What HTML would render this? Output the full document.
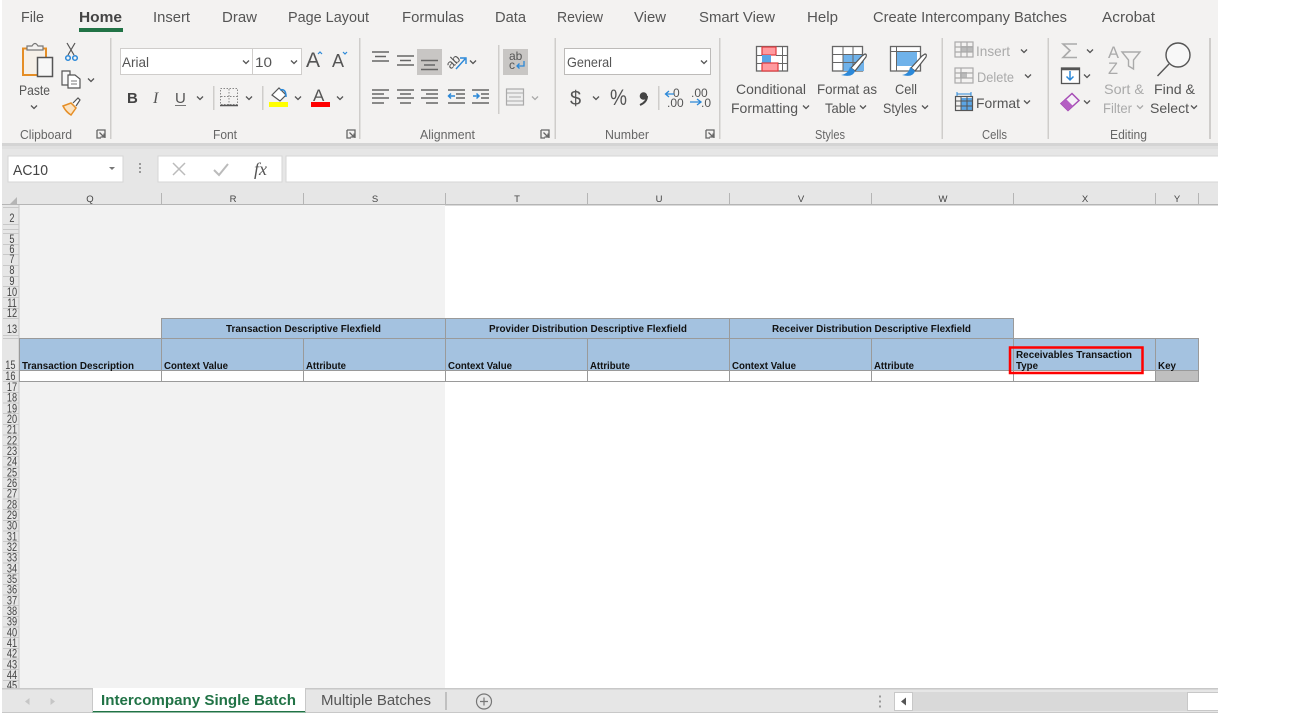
<!DOCTYPE html>
<html><head><meta charset="utf-8"><title>Excel</title>
<style>
html,body{margin:0;padding:0;background:#fff;width:1295px;height:715px;overflow:hidden}
svg{display:block;font-family:"Liberation Sans",sans-serif}
.t{font-size:15px;fill:#555}
.r{font-size:14px;fill:#555}
.g{font-size:14px;fill:#aaa}
.l{font-size:12.5px;fill:#666}
.c{font-size:9.5px;fill:#444;text-anchor:middle}
.n{font-size:11.5px;fill:#444;text-anchor:middle}
.b{font-size:10px;font-weight:bold;fill:#111}
.ch{fill:none;stroke:#555;stroke-width:1.3}
.ln{fill:none;stroke:#666;stroke-width:1.5}
.ic{fill:none;stroke:#666;stroke-width:1.3}
</style></head><body>
<svg width="1295" height="715" viewBox="0 0 1295 715" xmlns="http://www.w3.org/2000/svg">
<defs>
<path id="v" d="M-3 -1.500L0 1.500L3 -1.500"/>
<path id="lau" d="M0 0H8V8M0 0V8H4M2.5 2.5L7 7M7 3.5V7H3.5"/>
</defs>
<!-- backgrounds -->
<rect x="2" y="0" width="1216" height="143" fill="#f3f2f1"/>
<rect x="2" y="143" width="1216" height="40" fill="#e6e6e6"/>
<rect x="2" y="143" width="1216" height="3" fill="#d4d4d4"/>
<rect x="2" y="146" width="1216" height="3" fill="#e0e0e0"/>
<!-- tabs -->
<g class="t">
<text x="21" y="22" textLength="23" lengthAdjust="spacingAndGlyphs">File</text>
<text x="79" y="22" textLength="43" lengthAdjust="spacingAndGlyphs" font-weight="bold" style="fill:#444">Home</text>
<text x="153" y="22" textLength="37" lengthAdjust="spacingAndGlyphs">Insert</text>
<text x="222" y="22" textLength="35" lengthAdjust="spacingAndGlyphs">Draw</text>
<text x="288" y="22" textLength="81" lengthAdjust="spacingAndGlyphs">Page Layout</text>
<text x="402" y="22" textLength="62" lengthAdjust="spacingAndGlyphs">Formulas</text>
<text x="495" y="22" textLength="31" lengthAdjust="spacingAndGlyphs">Data</text>
<text x="557" y="22" textLength="46" lengthAdjust="spacingAndGlyphs">Review</text>
<text x="634" y="22" textLength="32" lengthAdjust="spacingAndGlyphs">View</text>
<text x="699" y="22" textLength="76" lengthAdjust="spacingAndGlyphs">Smart View</text>
<text x="807" y="22" textLength="31" lengthAdjust="spacingAndGlyphs">Help</text>
<text x="873" y="22" textLength="194" lengthAdjust="spacingAndGlyphs">Create Intercompany Batches</text>
<text x="1102" y="22" textLength="53" lengthAdjust="spacingAndGlyphs">Acrobat</text>
</g>
<rect x="79" y="28" width="44" height="4" fill="#217346"/>
<!-- dividers -->
<g fill="#cfcdcb">
<rect x="110" y="38" width="1.5" height="101"/><rect x="359" y="38" width="1.5" height="101"/>
<rect x="554.5" y="38" width="1.5" height="101"/><rect x="719" y="38" width="1.5" height="101"/>
<rect x="941.5" y="38" width="1.5" height="101"/><rect x="1047.5" y="38" width="1.5" height="101"/>
<rect x="1209" y="38" width="2" height="101"/><rect x="498" y="45" width="1.5" height="69"/>
<rect x="213" y="86" width="1.5" height="24"/><rect x="262" y="86" width="1.5" height="24"/>
<rect x="658" y="86" width="1.5" height="24"/>
</g>
<!-- clipboard -->
<path d="M23 48.5H46V75H23Z" fill="#f6f0e8" stroke="#e58e26" stroke-width="2"/>
<path d="M27 50V46H32Q35 41 38 46H43V50Z" fill="#f3f2f1" stroke="#777" stroke-width="1.2"/>
<rect x="37.500" y="57.500" width="15" height="19" fill="#f7f7f7" stroke="#555" stroke-width="1.5"/>
<text class="r" x="19" y="95" textLength="31" lengthAdjust="spacingAndGlyphs">Paste</text>
<use href="#v" x="34" y="107" class="ch"/>
<g fill="none" stroke="#555" stroke-width="1.2"><path d="M67 43L74 55M75 43L68 55"/></g>
<circle cx="68" cy="58" r="2.3" fill="none" stroke="#2b88d8" stroke-width="1.5"/><circle cx="75" cy="58" r="2.3" fill="none" stroke="#2b88d8" stroke-width="1.5"/>
<path d="M62 71H70V85H62Z" fill="#f7f7f7" stroke="#555" stroke-width="1.2"/>
<path d="M68 75H75L80 79V88H68Z" fill="#fff" stroke="#555" stroke-width="1.2"/>
<path d="M71 81H77M71 84H77" stroke="#777"/>
<use href="#v" x="91" y="80" class="ch"/>
<path d="M63 106L71 103L76 108L71 115Q66 112 63 106Z" fill="#fbe3c2" stroke="#e58e26" stroke-width="1.5"/>
<path d="M73 103L78 98L80 100L76 106" fill="#fff" stroke="#555" stroke-width="1.2"/>
<text class="l" x="20" y="139" textLength="52" lengthAdjust="spacingAndGlyphs">Clipboard</text>
<use href="#lau" x="97" y="130" class="ic"/>
<!-- font -->
<rect x="120.500" y="48.500" width="132" height="26" fill="#fff" stroke="#cfcdcb"/>
<rect x="252.500" y="48.500" width="49" height="26" fill="#fff" stroke="#cfcdcb"/>
<text class="r" x="122" y="67" textLength="27" lengthAdjust="spacingAndGlyphs">Arial</text>
<text class="r" x="255" y="67" textLength="17" lengthAdjust="spacingAndGlyphs">10</text>
<use href="#v" x="246" y="62" class="ch"/><use href="#v" x="294" y="62" class="ch"/>
<text x="306" y="67" font-size="21" fill="#555">A</text><path d="M318 54L320 52L322 54" fill="none" stroke="#2b88d8" stroke-width="1.2"/>
<text x="332" y="67" font-size="18" fill="#555">A</text><path d="M343 52L345 54L347 52" fill="none" stroke="#2b88d8" stroke-width="1.2"/>
<text x="127" y="103" font-size="15" font-weight="bold" fill="#444">B</text>
<text x="153" y="103" font-size="16" font-style="italic" font-family="Liberation Serif" fill="#555">I</text>
<text x="175" y="103" font-size="15" fill="#555">U</text><path d="M175 105.500H186" stroke="#777"/>
<use href="#v" x="200" y="98" class="ch"/>
<rect x="220.500" y="88.500" width="17" height="16" fill="none" stroke="#888" stroke-dasharray="1.500 1.500"/>
<path d="M229 89V105M221 96.500H237" stroke="#888" stroke-dasharray="1.500 1.500"/><path d="M220 105.500H238" stroke="#555" stroke-width="1.5"/>
<use href="#v" x="249" y="98" class="ch"/>
<path d="M272 95L279 88L286 95L280 101Z" fill="#fff" stroke="#555" stroke-width="1.2"/><path d="M280 90Q286 88 286 97" fill="none" stroke="#2b88d8" stroke-width="1.5"/>
<rect x="269" y="102" width="19" height="5" fill="#ffff00"/>
<use href="#v" x="298" y="98" class="ch"/>
<text x="313" y="101" font-size="17" fill="#555">A</text><rect x="311" y="102" width="19" height="5" fill="#ff0000"/>
<use href="#v" x="340" y="98" class="ch"/>
<text class="l" x="213" y="139" textLength="24" lengthAdjust="spacingAndGlyphs">Font</text>
<use href="#lau" x="347" y="130" class="ic"/>
<!-- alignment -->
<rect x="417" y="49" width="25" height="26" fill="#c8c6c4"/>
<rect x="503" y="49" width="25" height="26" fill="#c8c6c4"/>
<g class="ln">
<path d="M372 52H389M375 56.500H386M372 61H389"/>
<path d="M397 56H414M400 60.500H411M397 65H414"/>
<path d="M421 60.500H438M424 65H435M421 69.500H438"/>
<path d="M372 90H389M372 94H384M372 98H389M372 103H384"/>
<path d="M397 90H414M400 94H411M397 98H414M400 103H411"/>
<path d="M421 90H438M426 94H438M421 98H438M426 103H438"/>
<path d="M448 90H465M456 94H465M456 98H465M448 103H465"/>
<path d="M472 90H489M481 94H489M481 98H489M472 103H489"/>
</g>
<path d="M449 96H455M451 93.500L448.500 96L451 98.500" fill="none" stroke="#2b88d8" stroke-width="1.5"/>
<path d="M473 96H479M476.500 93.500L479 96L476.500 98.500" fill="none" stroke="#2b88d8" stroke-width="1.5"/>
<text x="446" y="66" font-size="13" fill="#555" transform="rotate(-45 453 62)">ab</text>
<path d="M456 69L465 59M460 58H466V64" fill="none" stroke="#2b88d8" stroke-width="1.4"/>
<use href="#v" x="473" y="62" class="ch"/>
<text x="509" y="60" font-size="12" fill="#555">ab</text><text x="509" y="69" font-size="12" fill="#555">c</text>
<path d="M524 61V66H517M519.500 63.500L517 66L519.500 68.500" fill="none" stroke="#2b88d8" stroke-width="1.3"/>
<rect x="506.500" y="89" width="17" height="16" fill="#eee" stroke="#aaa" stroke-width="1.2"/><path d="M506 93H524M506 101H524M509 97H521" stroke="#aaa"/>
<use href="#v" x="535" y="98" class="ch" style="stroke:#aaa"/>
<text class="l" x="420" y="139" textLength="55" lengthAdjust="spacingAndGlyphs">Alignment</text>
<use href="#lau" x="541" y="130" class="ic"/>
<!-- number -->
<rect x="564.500" y="48.500" width="146" height="26" fill="#fff" stroke="#bdbbb9"/>
<text class="r" x="567" y="67" textLength="45" lengthAdjust="spacingAndGlyphs">General</text>
<use href="#v" x="704" y="62" class="ch"/>
<text x="570" y="105" font-size="20" fill="#555">$</text><use href="#v" x="596" y="98" class="ch"/>
<text x="610" y="105" font-size="22" fill="#555" textLength="17" lengthAdjust="spacingAndGlyphs">%</text>
<circle cx="643.500" cy="96" r="3.800" fill="#444"/><path d="M647 96Q647 102 640 105" fill="none" stroke="#444" stroke-width="2"/>
<text x="673" y="97" font-size="12" fill="#555">0</text><text x="667" y="107" font-size="12" fill="#555">.00</text>
<path d="M666 94H674M669 91L665.500 94L669 97" fill="none" stroke="#2b88d8" stroke-width="1.3"/>
<text x="691" y="97" font-size="12" fill="#555">.00</text><text x="701" y="107" font-size="12" fill="#555">.0</text>
<path d="M690 102H700M697 99L701 102L697 105" fill="none" stroke="#2b88d8" stroke-width="1.3"/>
<text class="l" x="605" y="139" textLength="44" lengthAdjust="spacingAndGlyphs">Number</text>
<use href="#lau" x="706" y="130" class="ic"/>
<!-- styles icons -->
<rect x="756.500" y="46.500" width="31" height="24.500" fill="#fff" stroke="#666" stroke-width="1.300"/>
<rect x="762" y="47" width="14" height="8" fill="#ff9a9f" stroke="#e03a3e" stroke-width="1.200"/>
<rect x="762" y="55" width="9" height="8" fill="#5ba5e5"/>
<rect x="762" y="63" width="16" height="8" fill="#ff9a9f" stroke="#e03a3e" stroke-width="1.200"/>
<path d="M782.500 47V71M757 55.500H762M776 55.500H788M757 63.500H762M778 63.500H788" stroke="#666" fill="none"/>
<rect x="832.500" y="46.500" width="30" height="24.500" fill="#fff" stroke="#666" stroke-width="1.300"/>
<rect x="843" y="54" width="21" height="17" fill="#6fb2ea"/>
<path d="M843 47V71M853 47V71M833 54.500H863M833 62.500H863" stroke="#666" fill="none"/>
<path d="M851 68L862 56L865 54Q867 54 866 57L855 71Z" fill="#fff" stroke="#555" stroke-width="1.200"/>
<path d="M841 75Q848 74 850 67L855 71Q853 78 841 75Z" fill="#2b88d8"/>
<rect x="890.500" y="46.500" width="30" height="24.500" fill="#fff" stroke="#666" stroke-width="1.300"/>
<rect x="896" y="52" width="21" height="14" fill="#6fb2ea"/>
<path d="M891 51.500H920M896.500 47V71" stroke="#666" fill="none"/>
<path d="M911 68L922 56L925 54Q927 54 926 57L915 71Z" fill="#fff" stroke="#555" stroke-width="1.200"/>
<path d="M902 75Q909 74 910 67L915 71Q913 78 902 75Z" fill="#2b88d8"/>
<g class="r">
<text x="736" y="94" textLength="70" lengthAdjust="spacingAndGlyphs">Conditional</text>
<text x="731" y="113" textLength="67" lengthAdjust="spacingAndGlyphs">Formatting</text>
<text x="817" y="94" textLength="60" lengthAdjust="spacingAndGlyphs">Format as</text>
<text x="825" y="113" textLength="31" lengthAdjust="spacingAndGlyphs">Table</text>
<text x="895" y="94" textLength="22" lengthAdjust="spacingAndGlyphs">Cell</text>
<text x="883" y="113" textLength="34" lengthAdjust="spacingAndGlyphs">Styles</text>
</g>
<use href="#v" x="806" y="107" class="ch"/><use href="#v" x="863" y="107" class="ch"/><use href="#v" x="925" y="107" class="ch"/>
<text class="l" x="815" y="139" textLength="30" lengthAdjust="spacingAndGlyphs">Styles</text>
<!-- cells -->
<rect x="961" y="46" width="12" height="6" fill="#bbb"/><rect x="960" y="72" width="7" height="6" fill="#bbb"/>
<g fill="none" stroke="#aaa" stroke-width="1.200">
<rect x="955" y="42" width="18" height="15"/><path d="M955 47H973M955 52H973M961 42V57M967 42V57"/>
<rect x="955" y="68" width="18" height="15"/><path d="M955 73H973M955 78H973M961 68V83"/>
</g>
<text x="976" y="56" class="g" textLength="34" lengthAdjust="spacingAndGlyphs">Insert</text>
<text x="977" y="82" class="g" textLength="37" lengthAdjust="spacingAndGlyphs">Delete</text>
<text x="976" y="108" class="r" textLength="44" lengthAdjust="spacingAndGlyphs">Format</text>
<use href="#v" x="1024" y="51" class="ch"/><use href="#v" x="1028" y="76" class="ch"/><use href="#v" x="1027" y="102" class="ch"/>
<rect x="961" y="98" width="12" height="12" fill="#5ba5e5"/>
<rect x="955.500" y="96.500" width="17" height="14" fill="none" stroke="#555" stroke-width="1.200"/>
<path d="M955 101H973M955 106H973M961 97V111M967 97V111" stroke="#555" fill="none"/>
<path d="M957 94H971M957 92V96M971 92V96" stroke="#2b88d8" fill="none"/>
<text class="l" x="982" y="139" textLength="25" lengthAdjust="spacingAndGlyphs">Cells</text>
<!-- editing -->
<path d="M1077 44H1063L1070 50.500L1063 57.500H1077" fill="none" stroke="#aaa" stroke-width="1.600"/>
<use href="#v" x="1090" y="51" class="ch"/>
<rect x="1061.500" y="68" width="18" height="15.500" fill="#fff" stroke="#555" stroke-width="1.300"/><path d="M1061 69H1079" stroke="#555" stroke-width="2.500"/>
<path d="M1070 71V80M1066.500 76.500L1070 80L1073.500 76.500" fill="none" stroke="#2b88d8" stroke-width="1.500"/>
<use href="#v" x="1087" y="76" class="ch"/>
<path d="M1061 103.500L1072 93.500L1079 100.500L1068 110.500Z" fill="#f5f0f7" stroke="#a64db5" stroke-width="1.500"/><path d="M1061 103.500L1066 99L1073 106L1068 110.500Z" fill="#b45ec3"/>
<use href="#v" x="1087" y="102" class="ch"/>
<text x="1108" y="58" font-size="17" fill="#aaa" textLength="11" lengthAdjust="spacingAndGlyphs">A</text><text x="1108" y="74" font-size="17" fill="#aaa" textLength="10" lengthAdjust="spacingAndGlyphs">Z</text>
<path d="M1122 52H1140L1133.500 60V69L1128.500 66V60Z" fill="none" stroke="#aaa" stroke-width="1.400"/>
<text class="g" x="1104" y="94" textLength="40" lengthAdjust="spacingAndGlyphs">Sort &amp;</text>
<text class="g" x="1103" y="113" textLength="29" lengthAdjust="spacingAndGlyphs">Filter</text>
<use href="#v" x="1140" y="107" class="ch" style="stroke:#aaa"/>
<circle cx="1178" cy="55" r="12" fill="#f8f8f8" stroke="#555" stroke-width="1.400"/><path d="M1169 64L1157.500 76" stroke="#555" stroke-width="1.400"/>
<text class="r" x="1154" y="94" textLength="41" lengthAdjust="spacingAndGlyphs">Find &amp;</text>
<text class="r" x="1150" y="113" textLength="39" lengthAdjust="spacingAndGlyphs">Select</text>
<use href="#v" x="1194" y="107" class="ch"/>
<text class="l" x="1110" y="139" textLength="37" lengthAdjust="spacingAndGlyphs">Editing</text>
<!-- formula bar -->
<rect x="8" y="156" width="115" height="26" fill="#fff" stroke="#d6d6d6"/>
<text x="13" y="175" font-size="15" fill="#444" textLength="35" lengthAdjust="spacingAndGlyphs">AC10</text>
<path d="M109 167H115L112 170Z" fill="#777"/>
<path d="M140 163V165M140 167V169M140 171V173" stroke="#999" stroke-width="2"/>
<rect x="158" y="156" width="124" height="26" fill="#fff" stroke="#d6d6d6"/>
<path d="M173 163L185 175M185 163L173 175" stroke="#bbb" stroke-width="1.500"/>
<path d="M214 170L219 175L228 164" fill="none" stroke="#bbb" stroke-width="2"/>
<text x="254" y="175" font-size="18" font-style="italic" font-family="Liberation Serif" fill="#555">fx</text>
<rect x="286" y="156" width="932" height="26" fill="#fff"/>
<path d="M1218 156H286V182H1218" fill="none" stroke="#d6d6d6"/>
<!-- grid -->
<rect x="2" y="183" width="1216" height="21" fill="#e6e6e6"/>
<rect x="2" y="204" width="1216" height="1.500" fill="#b5b5b5"/>
<rect x="2" y="205" width="17" height="484" fill="#e6e6e6"/>
<rect x="19" y="205" width="426" height="484" fill="#f2f2f2"/>
<rect x="18.500" y="205" width="1" height="484" fill="#c4c4c4"/>
<path d="M17 197V204H10Z" fill="#b5b5b5"/>
<path d="M161.500 193V204M303.500 193V204M445.500 193V204M587.500 193V204M729.500 193V204M871.500 193V204M1013.500 193V204M1155.500 193V204M1198.500 193V204" stroke="#b5b5b5" fill="none"/>
<g class="c">
<text x="90" y="202">Q</text><text x="233" y="202">R</text><text x="375" y="202">S</text><text x="517" y="202">T</text><text x="659" y="202">U</text><text x="801" y="202">V</text><text x="943" y="202">W</text><text x="1085" y="202">X</text><text x="1177" y="202">Y</text>
</g>
<path d="M3 207.500H19M3 224.500H19M3 229.500H19M3 233.500H19M3 244.500H19M3 254.500H19M3 265.500H19M3 276.500H19M3 286.500H19M3 297.500H19M3 308.500H19M3 318.500H19M3 335.500H19M3 338.500H19M3 370.500H19M3 381.500H19M3 392.500H19M3 403H19M3 413.500H19M3 424.500H19M3 435H19M3 445.500H19M3 456.500H19M3 467H19M3 477.500H19M3 488.500H19M3 499H19M3 509.500H19M3 520.500H19M3 531H19M3 541.500H19M3 552.500H19M3 563H19M3 573.500H19M3 584.500H19M3 595H19M3 605.500H19M3 616.500H19M3 627H19M3 637.500H19M3 648.500H19M3 659H19M3 669.500H19M3 680.500H19" stroke="#c8c8c8" stroke-width="1" fill="none"/>
<g class="n" transform="translate(12 0) scale(.8 1) translate(-12 0)">
<text x="12" y="222">2</text><text x="12" y="243">5</text><text x="12" y="253">6</text><text x="12" y="263">7</text><text x="12" y="274">8</text><text x="12" y="285">9</text>
<text x="12" y="296">10</text><text x="12" y="307">11</text><text x="12" y="317">12</text><text x="12" y="333">13</text><text x="10" y="369">15</text><text x="10" y="380">16</text>
<text x="12" y="391">17</text><text x="12" y="401.700">18</text><text x="12" y="412.300">19</text><text x="12" y="423">20</text><text x="12" y="433.700">21</text><text x="12" y="444.300">22</text><text x="12" y="455">23</text><text x="12" y="465.700">24</text><text x="12" y="476.300">25</text><text x="12" y="487">26</text><text x="12" y="497.700">27</text><text x="12" y="508.300">28</text><text x="12" y="519">29</text><text x="12" y="529.700">30</text><text x="12" y="540.300">31</text><text x="12" y="551">32</text><text x="12" y="561.700">33</text><text x="12" y="572.300">34</text><text x="12" y="583">35</text><text x="12" y="593.700">36</text><text x="12" y="604.300">37</text><text x="12" y="615">38</text><text x="12" y="625.700">39</text><text x="12" y="636.300">40</text><text x="12" y="647">41</text><text x="12" y="657.700">42</text><text x="12" y="668.300">43</text><text x="12" y="679">44</text><text x="12" y="689.700">45</text>
</g>
<!-- table -->
<rect x="161.500" y="318.500" width="852" height="20" fill="#a4c2e0" stroke="#9a9a9a"/>
<rect x="19.500" y="338.500" width="1179" height="32" fill="#a4c2e0" stroke="#9a9a9a"/>
<rect x="19.500" y="370.500" width="1179" height="11" fill="#fff" stroke="#9a9a9a"/>
<rect x="1156" y="371" width="42" height="10" fill="#bfbfbf"/>
<path d="M445.500 318V381M729.500 318V381M161.500 338V381M303.500 338V381M587.500 338V381M871.500 338V381M1013.500 338V381M1155.500 338V381" stroke="#9a9a9a" fill="none"/>
<g class="b">
<text x="226" y="332" textLength="155" lengthAdjust="spacingAndGlyphs">Transaction Descriptive Flexfield</text>
<text x="489" y="332" textLength="198" lengthAdjust="spacingAndGlyphs">Provider Distribution Descriptive Flexfield</text>
<text x="772" y="332" textLength="199" lengthAdjust="spacingAndGlyphs">Receiver Distribution Descriptive Flexfield</text>
<text x="22" y="369" textLength="112" lengthAdjust="spacingAndGlyphs">Transaction Description</text>
<text x="164" y="369" textLength="64" lengthAdjust="spacingAndGlyphs">Context Value</text>
<text x="306" y="369" textLength="40" lengthAdjust="spacingAndGlyphs">Attribute</text>
<text x="448" y="369" textLength="64" lengthAdjust="spacingAndGlyphs">Context Value</text>
<text x="590" y="369" textLength="40" lengthAdjust="spacingAndGlyphs">Attribute</text>
<text x="732" y="369" textLength="64" lengthAdjust="spacingAndGlyphs">Context Value</text>
<text x="874" y="369" textLength="40" lengthAdjust="spacingAndGlyphs">Attribute</text>
<text x="1016" y="358" textLength="116" lengthAdjust="spacingAndGlyphs">Receivables Transaction</text>
<text x="1016" y="369" textLength="22" lengthAdjust="spacingAndGlyphs">Type</text>
<text x="1158" y="369" textLength="18" lengthAdjust="spacingAndGlyphs">Key</text>
</g>
<rect x="1010" y="347.500" width="132.500" height="25.500" fill="none" stroke="#ff0000" stroke-width="2.500"/>
<!-- sheet tabs -->
<rect x="2" y="688" width="1216" height="25" fill="#e6e6e6"/>
<rect x="2" y="688" width="1216" height="1.500" fill="#c8c8c8"/>
<rect x="2" y="712" width="1216" height="1" fill="#c8c8c8"/>
<path d="M29.500 698L25 701.500L29.500 705Z M50.500 698L55 701.500L50.500 705Z" fill="#c6c6c6"/>
<rect x="92" y="688" width="214" height="25" fill="#fff"/>
<rect x="92" y="711" width="214" height="1.500" fill="#217346"/>
<path d="M92.500 688V712M305.500 688V712" stroke="#c8c8c8"/>
<text x="101" y="705" font-size="15" font-weight="bold" fill="#217346" textLength="195" lengthAdjust="spacingAndGlyphs">Intercompany Single Batch</text>
<text x="321" y="705" font-size="15" fill="#555" textLength="110" lengthAdjust="spacingAndGlyphs">Multiple Batches</text>
<rect x="445.500" y="692" width="1" height="18" fill="#999"/>
<circle cx="484" cy="701.500" r="7.500" fill="none" stroke="#777" stroke-width="1.200"/><path d="M480 701.500H488M484 697.500V705.500" stroke="#777" stroke-width="1.200"/>
<path d="M880 695.500V697.500M880 700.500V702.500M880 705.500V707.500" stroke="#999" stroke-width="2"/>
<rect x="894" y="692" width="324" height="19" fill="#d9d9d9"/>
<rect x="894.500" y="692.500" width="18" height="18" fill="#fff" stroke="#c8c8c8"/>
<path d="M906 697.500L901 701.500L906 705.500Z" fill="#555"/>
<rect x="1187" y="692" width="31" height="19" fill="#fff"/>
<path d="M1218 692.500H1187.500V710.500H1218" fill="none" stroke="#c8c8c8"/>
</svg>
</body></html>
